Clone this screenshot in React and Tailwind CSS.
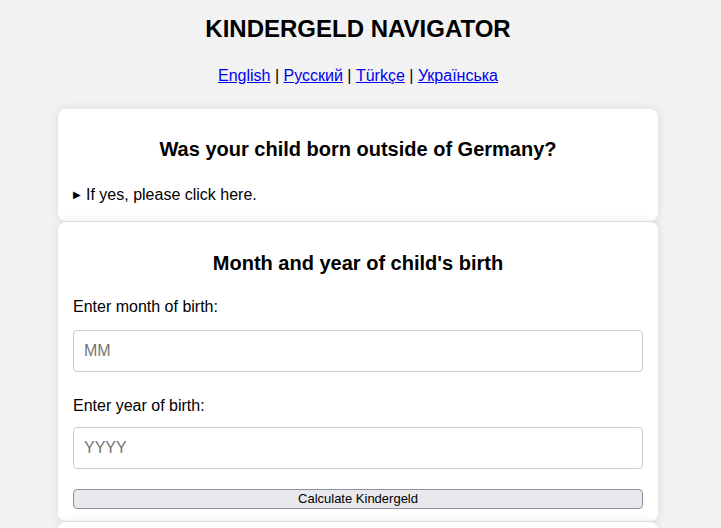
import { useState } from 'react';

const Card = ({ children, className = '' }) => (
  <div className={`bg-white rounded-lg shadow-[0_0_10px_rgba(0,0,0,0.1)] px-[15px] ${className}`}>
    {children}
  </div>
);

const App = () => {
  const [month, setMonth] = useState('');
  const [year, setYear] = useState('');

  const languages = ['English', 'Русский', 'Türkçe', 'Українська'];

  return (
    <div className="min-h-screen bg-[#f2f2f2] text-black font-['Liberation_Sans',Arial,sans-serif] overflow-hidden">
      <div className="w-[716px]">
        {/* Header */}
        <h1 className="text-center text-[24px] leading-[28px] font-bold pt-[15px]">
          KINDERGELD NAVIGATOR
        </h1>

        {/* Language links */}
        <div className="text-center text-[16px] leading-[18px] mt-[24px]">
          {languages.map((lang, i) => (
            <span key={lang}>
              <a href="#" className="text-[#0000ee] underline">{lang}</a>
              {i < languages.length - 1 && ' | '}
            </span>
          ))}
        </div>

        <div className="w-[600px] mx-auto mt-[24px] flex flex-col gap-[1px]">
          {/* Born abroad */}
          <Card className="pt-[29px] pb-[17px]">
            <h2 className="text-center text-[20px] leading-[23px] font-bold">
              Was your child born outside of Germany?
            </h2>
            <div className="mt-[25px] text-[16px] leading-[18px] flex items-center cursor-pointer">
              <span className="text-[10px] mr-[5px] leading-none">▶</span>
              If yes, please click here.
            </div>
          </Card>

          {/* Birth date */}
          <Card className="pt-[30px] pb-[12px]">
            <h2 className="text-center text-[20px] leading-[23px] font-bold">
              Month and year of child's birth
            </h2>
            <label className="block mt-[23px] text-[16px] leading-[18px]">Enter month of birth:</label>
            <input
              value={month}
              onChange={(e) => setMonth(e.target.value)}
              placeholder="MM"
              className="block w-full mt-[14px] h-[42px] px-[10px] text-[16px] border border-[#cccccc] rounded-[4px] placeholder:text-[#757575] outline-none"
            />
            <label className="block mt-[25px] text-[16px] leading-[18px]">Enter year of birth:</label>
            <input
              value={year}
              onChange={(e) => setYear(e.target.value)}
              placeholder="YYYY"
              className="block w-full mt-[12px] h-[42px] px-[10px] text-[16px] border border-[#cccccc] rounded-[4px] placeholder:text-[#757575] outline-none"
            />
            <button className="block w-full mt-[20px] h-[20px] text-[13px] leading-[16px] bg-[#e9e9ed] border border-[#8f8f9d] rounded-[4px]">
              Calculate Kindergeld
            </button>
          </Card>

          {/* Next card peeking */}
          <Card className="h-[80px]" />
        </div>
      </div>
    </div>
  );
};

export default App;
